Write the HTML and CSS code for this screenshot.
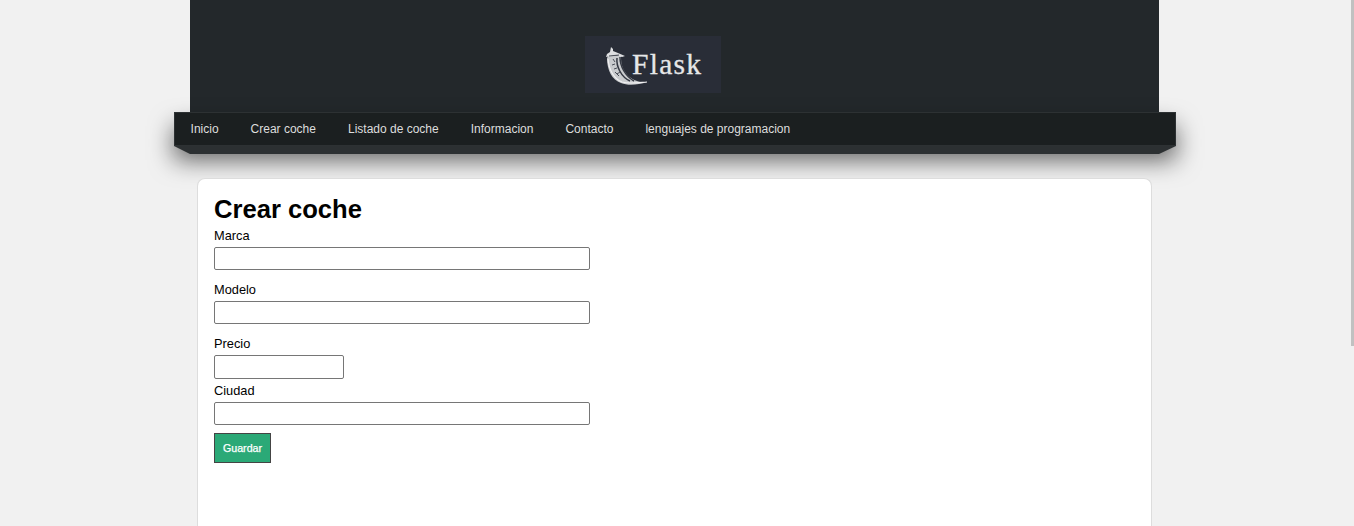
FILE: index.html
```
<!DOCTYPE html>
<html lang="es">
<head>
<meta charset="utf-8">
<title>Crear coche</title>
<link rel="stylesheet" href="styles.css">
</head>
<body>
<header class="header">
  <svg class="logo" viewBox="0 0 136 57" role="img" aria-label="Flask">
    <rect width="136" height="57" fill="#292d37"/>
    <path d="M22 22C22 34 27 44 36 47C43 50 53 49 62 46C51 47 44 42 40 36C36 30 36 24 36 20L24 19Z" fill="#c9cbce"/>
    <path d="M26 11L28 13L28 15L33 17L40 20L37 21L31 19L21 21L22 18L25 16Z" fill="#dedfe1"/>
    <path d="M32 22C31 30 36 41 45 45M35 21C35 30 40 40 49 45" fill="none" stroke="#343842" stroke-width="1.5"/>
    <path d="M28 23L30 26M27 29L30 28M29 33L32 32M32 38L35 36M24 20L34 19M30 36L34 40" fill="none" stroke="#4a4e57"/>
    <path d="M23 23C24 34 29 43 37 46C44 48 50 47 62 46" fill="none" stroke="#f1f1f2" stroke-width="1.2"/>
    <text class="logo-text" x="47" y="37.5" textLength="69" lengthAdjust="spacing">Flask</text>
  </svg>
</header>
<nav class="nav">
  <ul class="menu">
    <li><a>Inicio</a></li>
    <li><a>Crear coche</a></li>
    <li><a>Listado de coche</a></li>
    <li><a>Informacion</a></li>
    <li><a>Contacto</a></li>
    <li><a>lenguajes de programacion</a></li>
  </ul>
  <div class="nav-fold"></div>
</nav>
<main class="content">
  <h1>Crear coche</h1>
  <form class="form">
    <label for="marca">Marca</label>
    <input id="marca" type="text">
    <label for="modelo">Modelo</label>
    <input id="modelo" type="text">
    <label for="precio">Precio</label>
    <input id="precio" class="price" type="number">
    <label for="ciudad">Ciudad</label>
    <input id="ciudad" type="text">
    <button type="button">Guardar</button>
  </form>
</main>
<div class="scroll-thumb"></div>
</body>
</html>
```
FILE: styles.css
```
* { box-sizing: border-box; }
body {
  display: flex;
  flex-direction: column;
  margin: 0;
  height: 100vh;
  overflow: hidden;
  background: #f1f1f1;
  color: #000;
  font-family: "Liberation Sans", Arial, sans-serif;
  font-size: 12.8px;
}
.header {
  flex: none;
  width: 969px;
  height: 112px;
  margin-left: 190px;
  padding: 36px 0 0 395px;
  background: #23282b;
}
.logo { display: block; width: 136px; height: 57px; }
.logo-text {
  font-family: "Liberation Serif", serif;
  font-size: 29.5px;
  fill: #e6e7e8;
  stroke: #e6e7e8;
  stroke-width: .3px;
}
.nav {
  flex: none;
  width: 1002px;
  margin-left: 174px;
  position: relative;
}
.menu {
  display: flex;
  height: 34px;
  margin: 0;
  padding: 0;
  list-style: none;
  background: #1b1f20;
  border: 1px solid #2d3133;
  box-shadow: 0 14px 24px rgba(0, 0, 0, .6);
}
.menu a {
  display: block;
  padding: 0 16px;
  color: #ddd;
  font-size: 12px;
  line-height: 32px;
}
.menu li:first-child a { padding-left: 15.6px; }
.nav-fold {
  height: 8px;
  background: #2c3032;
  clip-path: polygon(0 0, 100% 0, 985px 100%, 16px 100%);
  position: relative;
}
.content {
  flex: 1;
  width: 955px;
  margin: 24px 0 0 197px;
  padding: 15px 16px;
  position: relative;
  background: #fff;
  border: 1px solid #ddd;
  border-bottom: 0;
  border-radius: 8px 8px 0 0;
}
h1 { margin: 0; font-size: 25.6px; line-height: 30px; }
.form { display: flex; flex-direction: column; align-items: flex-start; }
label { height: 23px; line-height: 23px; }
input {
  width: 376px;
  height: 23px;
  margin: 0 0 8px;
  border: 1px solid #767676;
  border-radius: 2px;
  background: #fff;
}
.price { width: 130px; height: 24px; margin: 0; }
button {
  width: 57px;
  height: 30px;
  padding: 0;
  border: 1px solid #444;
  background: #2ba977;
  color: #fff;
  font: 10.67px "Liberation Sans", Arial, sans-serif;
  -webkit-text-stroke: .25px #fff;
}
.scroll-thumb {
  position: absolute;
  top: 0;
  right: 0;
  width: 3px;
  height: 346px;
  background: #c1c1c1;
}
```
